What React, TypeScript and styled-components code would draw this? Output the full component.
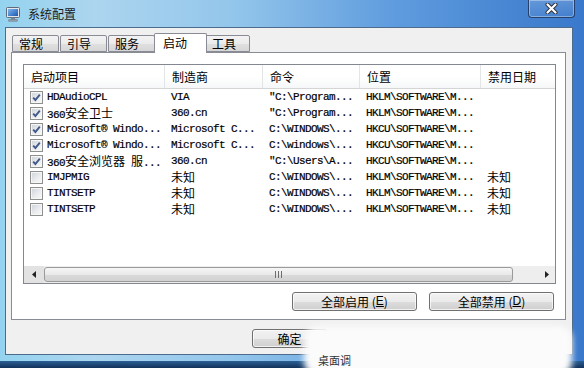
import styled, { createGlobalStyle } from "styled-components";

const GlobalStyle = createGlobalStyle`
  html, body {
    margin: 0;
    padding: 0;
    background: #fff;
  }
  body {
    overflow: hidden;
    font-family: "Noto Sans CJK SC", "Liberation Sans", sans-serif;
  }
`;

const Window = styled.div`
  position: relative;
  width: 584px;
  height: 368px;
  display: flex;
  flex-direction: column;
  overflow: hidden;
  background: linear-gradient(
    to right,
    #94d3ef 0%,
    #acd5ef 16%,
    #93c6eb 40%,
    #5e9bde 68%,
    #3978cb 100%
  );
`;

const TitleBar = styled.div`
  display: flex;
  height: 27px;
  flex-shrink: 0;
`;

const Caption = styled.div`
  display: flex;
  align-items: center;
  gap: 7px;
  padding-left: 6px;
  font-size: 12px;
  line-height: 14px;
  color: #1b1b1b;
`;

const CloseBtn = styled.div`
  margin-left: auto;
  margin-right: 9px;
  width: 47px;
  height: 18px;
  box-sizing: border-box;
  border: 1px solid rgba(25, 45, 80, 0.8);
  border-top: none;
  border-radius: 0 0 4px 4px;
  box-shadow: inset 0 0 0 1px rgba(255, 255, 255, 0.35);
  background: linear-gradient(rgba(255, 255, 255, 0.18), rgba(255, 255, 255, 0.04));
  display: flex;
  align-items: center;
  justify-content: center;
`;

const Frame = styled.div`
  flex: 1;
  display: flex;
  padding: 0 11px 13px 5px;
  background: linear-gradient(
    to bottom,
    transparent calc(100% - 7px),
    #2b5f94 calc(100% - 7px),
    #12325a 100%
  );
`;

const Client = styled.div`
  width: 568px;
  box-sizing: border-box;
  border: 1px solid #4d6b8c;
  background: #f0f0f0;
  padding: 5px 6px 0 5px;
  display: flex;
  flex-direction: column;
`;

const TabRow = styled.div`
  display: flex;
  align-items: flex-end;
  height: 19px;
  padding-left: 1px;
  position: relative;
  z-index: 1;
`;

const Tab = styled.div<{ $active?: boolean; $w: number }>`
  width: ${(p) => p.$w}px;
  height: ${(p) => (p.$active ? 20 : 17)}px;
  box-sizing: border-box;
  margin: 0 ${(p) => (p.$active ? -2 : 1)}px ${(p) => (p.$active ? -1 : 0)}px
    ${(p) => (p.$active ? -2 : 0)}px;
  padding-left: ${(p) => (p.$active ? 8 : 6)}px;
  border: 1px solid #898c95;
  border-bottom: ${(p) => (p.$active ? "none" : "1px solid #898c95")};
  border-radius: 2px 2px 0 0;
  background: ${(p) =>
    p.$active
      ? "#ffffff"
      : "linear-gradient(#f3f3f3 0%, #ebebeb 50%, #e0e0e0 51%, #d6d6d6 100%)"};
  font-size: 12px;
  line-height: ${(p) => (p.$active ? 18 : 16)}px;
  color: #000;
  position: relative;
  z-index: ${(p) => (p.$active ? 2 : 1)};
`;

const Panel = styled.div`
  height: 268px;
  box-sizing: border-box;
  border: 1px solid #898c95;
  background: #fff;
  padding: 11px 9px 0 11px;
  display: flex;
  flex-direction: column;
`;

const ListView = styled.div`
  height: 220px;
  box-sizing: border-box;
  border: 1px solid #828790;
  display: flex;
  flex-direction: column;
  background: #fff;
`;

const columns = "141px 98px 97px 121px 1fr";

const HeaderRow = styled.div`
  display: grid;
  grid-template-columns: ${columns};
  height: 24px;
  box-sizing: border-box;
  border-bottom: 1px solid #d5d5d5;
  background: linear-gradient(#ffffff 0%, #ffffff 50%, #f6f7f8 100%);
`;

const HeaderCell = styled.div`
  padding-left: 7px;
  border-right: 1px solid #e3e4e6;
  font-size: 12px;
  line-height: 23px;
  color: #000;
  white-space: nowrap;
  overflow: hidden;
  &:last-child {
    border-right: none;
  }
`;

const Rows = styled.div`
  flex: 1;
`;

const Row = styled.div`
  display: grid;
  grid-template-columns: ${columns};
  height: 16px;
`;

const Cell = styled.div`
  display: flex;
  align-items: center;
  padding-left: 6px;
  font-family: "Liberation Mono", "Noto Sans CJK SC", monospace;
  font-size: 11px;
  letter-spacing: -0.6px;
  color: #000;
  -webkit-text-stroke: 0.2px #000;
  white-space: pre;
  overflow: hidden;
`;

const NameCell = styled(Cell)`
  gap: 4px;
`;

const Han = styled.span`
  font-family: "Noto Sans CJK SC", sans-serif;
  font-size: 12px;
  letter-spacing: 0;
  line-height: 16px;
  -webkit-text-stroke: 0;
`;

const Box = styled.span`
  flex-shrink: 0;
  width: 13px;
  height: 13px;
  box-sizing: border-box;
  border: 1px solid #8e8f8f;
  box-shadow: inset 0 0 0 1px #f6f6f6;
  background: linear-gradient(135deg, #cfd2d6 0%, #e9ebee 55%, #fbfbfb 100%);
  display: flex;
  align-items: center;
  justify-content: center;
`;

const HScroll = styled.div`
  height: 17px;
  display: flex;
  background: #eeeeee;
`;

const ArrowBtn = styled.div<{ $w: number; $shade?: boolean }>`
  width: ${(p) => p.$w}px;
  display: flex;
  align-items: center;
  justify-content: center;
  background: ${(p) => (p.$shade ? "#e2e2e2" : "transparent")};
`;

const Thumb = styled.div`
  width: 469px;
  box-sizing: border-box;
  margin: 1px 0;
  border: 1px solid #9a9a9a;
  border-radius: 3px;
  background: linear-gradient(#f6f6f6 0%, #e9e9e9 50%, #dadada 51%, #d2d2d2 100%);
  display: flex;
  align-items: center;
  justify-content: center;
`;

const Track = styled.div`
  flex: 1;
`;

const ButtonRow = styled.div`
  margin-top: 8px;
  display: flex;
  justify-content: flex-end;
  gap: 12px;
  padding-right: 2px;
`;

const PushButton = styled.div<{ $w: number }>`
  width: ${(p) => p.$w}px;
  height: 19px;
  box-sizing: border-box;
  border: 1px solid #707070;
  border-radius: 3px;
  box-shadow: inset 0 0 0 1px rgba(255, 255, 255, 0.7);
  background: linear-gradient(#f2f2f2 0%, #ebebeb 50%, #dddddd 51%, #cfcfcf 100%);
  display: flex;
  align-items: center;
  justify-content: center;
  font-size: 12px;
  line-height: 17px;
  color: #000;
  u {
    font-family: "Liberation Sans", sans-serif;
  }
`;

const Footer = styled.div`
  margin-top: 9px;
  display: flex;
  padding-left: 241px;
`;

const Watermark = styled.div`
  position: absolute;
  left: 304px;
  top: 326px;
  width: 268px;
  height: 50px;
  background: #fbfbfb;
  border-radius: 14px;
  filter: blur(3px);
`;

const WatermarkText = styled.span`
  position: absolute;
  left: 318px;
  top: 354px;
  font-size: 11px;
  line-height: 13px;
  color: #333;
`;

type Item = {
  on: boolean;
  name: string;
  maker: string;
  cmd: string;
  loc: string;
  date: string;
};

const items: Item[] = [
  { on: true, name: "HDAudioCPL", maker: "VIA", cmd: '"C:\\Program...', loc: "HKLM\\SOFTWARE\\M...", date: "" },
  { on: true, name: "360安全卫士", maker: "360.cn", cmd: '"C:\\Program...', loc: "HKLM\\SOFTWARE\\M...", date: "" },
  { on: true, name: "Microsoft® Windo...", maker: "Microsoft C...", cmd: "C:\\WINDOWS\\...", loc: "HKCU\\SOFTWARE\\M...", date: "" },
  { on: true, name: "Microsoft® Windo...", maker: "Microsoft C...", cmd: "C:\\windows\\...", loc: "HKCU\\SOFTWARE\\M...", date: "" },
  { on: true, name: "360安全浏览器 服...", maker: "360.cn", cmd: '"C:\\Users\\A...', loc: "HKCU\\SOFTWARE\\M...", date: "" },
  { on: false, name: "IMJPMIG", maker: "未知", cmd: "C:\\WINDOWS\\...", loc: "HKLM\\SOFTWARE\\M...", date: "未知" },
  { on: false, name: "TINTSETP", maker: "未知", cmd: "C:\\WINDOWS\\...", loc: "HKLM\\SOFTWARE\\M...", date: "未知" },
  { on: false, name: "TINTSETP", maker: "未知", cmd: "C:\\WINDOWS\\...", loc: "HKLM\\SOFTWARE\\M...", date: "未知" },
];

const tabs = [
  { label: "常规", w: 47 },
  { label: "引导", w: 47 },
  { label: "服务", w: 47 },
  { label: "启动", w: 53, active: true },
  { label: "工具", w: 45 },
];

const hanRe = /([\u2E80-\u9FFF\uFF00-\uFFEF]+)/;

function Mixed({ text }: { text: string }) {
  return (
    <>
      {text.split(hanRe).map((s, i) =>
        i % 2 === 1 ? <Han key={i}>{s}</Han> : s
      )}
    </>
  );
}

function CheckBox({ on }: { on: boolean }) {
  return (
    <Box>
      {on && (
        <svg width="9" height="9" viewBox="0 0 9 9">
          <path d="M1.2 4.6 L3.4 7 L7.8 1.6" fill="none" stroke="#40588a" strokeWidth="1.9" />
        </svg>
      )}
    </Box>
  );
}

function AppIcon() {
  return (
    <svg width="15" height="16" viewBox="0 0 15 16">
      <defs>
        <linearGradient id="scr" x1="0" y1="0" x2="1" y2="1">
          <stop offset="0" stopColor="#7fb6ec" />
          <stop offset="1" stopColor="#1d57b3" />
        </linearGradient>
      </defs>
      <rect x="0.5" y="1.5" width="13" height="10" rx="1" fill="#e3e7ec" stroke="#5f6b78" />
      <rect x="2" y="3" width="10" height="7" fill="url(#scr)" />
      <rect x="5" y="11.5" width="4" height="2" fill="#7b8591" />
      <rect x="2.5" y="13.5" width="9" height="1.8" rx="0.5" fill="#9aa3ad" stroke="#5f6b78" strokeWidth="0.5" />
    </svg>
  );
}

function CloseGlyph() {
  return (
    <svg width="13" height="11" viewBox="0 0 13 11">
      <path d="M2.5 1.5 L10.5 9.5 M10.5 1.5 L2.5 9.5" stroke="#2a2f3a" strokeWidth="4" strokeLinecap="round" />
      <path d="M2.5 1.5 L10.5 9.5 M10.5 1.5 L2.5 9.5" stroke="#ffffff" strokeWidth="2.2" strokeLinecap="round" />
    </svg>
  );
}

function Arrow({ dir }: { dir: "left" | "right" }) {
  return (
    <svg width="4" height="7" viewBox="0 0 4 7">
      <path d={dir === "left" ? "M4 0 L0 3.5 L4 7 Z" : "M0 0 L4 3.5 L0 7 Z"} fill="#222" />
    </svg>
  );
}

function Grip() {
  return (
    <svg width="9" height="7" viewBox="0 0 9 7">
      <path d="M1.5 0 V7 M4.5 0 V7 M7.5 0 V7" stroke="#6d6d6d" strokeWidth="1" />
    </svg>
  );
}

export default function App() {
  return (
    <>
      <GlobalStyle />
      <Window>
        <TitleBar>
          <Caption>
            <AppIcon />
            <span>系统配置</span>
          </Caption>
          <CloseBtn>
            <CloseGlyph />
          </CloseBtn>
        </TitleBar>
        <Frame>
          <Client>
            <TabRow>
              {tabs.map((t) => (
                <Tab key={t.label} $w={t.w} $active={t.active}>
                  {t.label}
                </Tab>
              ))}
            </TabRow>
            <Panel>
              <ListView>
                <HeaderRow>
                  <HeaderCell>启动项目</HeaderCell>
                  <HeaderCell>制造商</HeaderCell>
                  <HeaderCell>命令</HeaderCell>
                  <HeaderCell>位置</HeaderCell>
                  <HeaderCell>禁用日期</HeaderCell>
                </HeaderRow>
                <Rows>
                  {items.map((it, i) => (
                    <Row key={i}>
                      <NameCell>
                        <CheckBox on={it.on} />
                        <span>
                          <Mixed text={it.name} />
                        </span>
                      </NameCell>
                      <Cell>
                        <Mixed text={it.maker} />
                      </Cell>
                      <Cell>{it.cmd}</Cell>
                      <Cell>{it.loc}</Cell>
                      <Cell>
                        <Mixed text={it.date} />
                      </Cell>
                    </Row>
                  ))}
                </Rows>
                <HScroll>
                  <ArrowBtn $w={20} $shade>
                    <Arrow dir="left" />
                  </ArrowBtn>
                  <Thumb>
                    <Grip />
                  </Thumb>
                  <Track />
                  <ArrowBtn $w={17}>
                    <Arrow dir="right" />
                  </ArrowBtn>
                </HScroll>
              </ListView>
              <ButtonRow>
                <PushButton $w={125}>
                  全部启用 (<u>E</u>)
                </PushButton>
                <PushButton $w={125}>
                  全部禁用 (<u>D</u>)
                </PushButton>
              </ButtonRow>
            </Panel>
            <Footer>
              <PushButton $w={75}>确定</PushButton>
            </Footer>
          </Client>
        </Frame>
        <Watermark />
        <WatermarkText>桌面调</WatermarkText>
      </Window>
    </>
  );
}
